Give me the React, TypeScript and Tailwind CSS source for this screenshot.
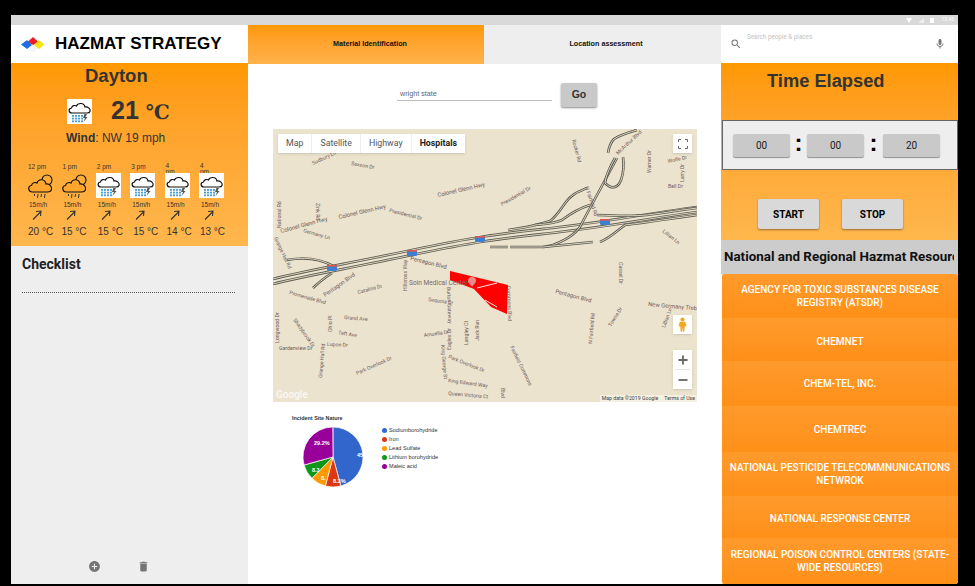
import { MdAddCircle, MdDelete, MdMic, MdSearch } from "react-icons/md";

const HOURS = [
  { time: "12 pm", icon: "rain", temp: "20 °C", tempPad: "pl-[1px]" },
  { time: "1 pm", icon: "rain", temp: "15 °C", tempPad: "pl-[0px]" },
  { time: "2 pm", icon: "storm", temp: "15 °C", tempPad: "pl-[2px]" },
  { time: "3 pm", icon: "storm", temp: "15 °C", tempPad: "pl-[3px]" },
  { time: "4 pm", icon: "storm", temp: "14 °C", tempPad: "pl-[2px]", narrow: true },
  { time: "4 pm", icon: "storm", temp: "13 °C", tempPad: "pl-[1px]", narrow: true },
];

const RESOURCES = [
  { name: "AGENCY FOR TOXIC SUBSTANCES DISEASE REGISTRY (ATSDR)", h: "h-[44px] rounded-t-[2px] px-[8px]" },
  { name: "CHEMNET", h: "h-[43px] pt-[3px]" },
  { name: "CHEM-TEL, INC.", h: "h-[45px]" },
  { name: "CHEMTREC", h: "h-[46px]" },
  { name: "NATIONAL PESTICIDE TELECOMMNUNICATIONS NETWROK", h: "h-[44px] px-[4px]" },
  { name: "NATIONAL RESPONSE CENTER", h: "h-[42px] pt-[3px]" },
  { name: "REGIONAL POISON CONTROL CENTERS (STATE-WIDE RESOURCES)", h: "h-[46px] rounded-b-[2px] px-[8px]" },
];

const LEGEND = [
  { label: "Sodiumborohydride", color: "bg-[#3366cc]" },
  { label: "Iron", color: "bg-[#dc3912]" },
  { label: "Lead Sulfate", color: "bg-[#ff9900]" },
  { label: "Lithium borohydride", color: "bg-[#109618]" },
  { label: "Maleic acid", color: "bg-[#990099]" },
];

// x, y, rotation, text
const STREETS: [number, number, number, string][] = [
  [313, 165, -25, "Sudbury Ln"],
  [351, 165, 10, "Saxson Dr"],
  [281, 228, -90, "National Rd"],
  [316, 203, 90, "Zink Rd"],
  [281, 233, -15, "Colonel Glenn Hwy"],
  [339, 219, -13, "Colonel Glenn Hwy"],
  [438, 197, -13, "Colonel Glenn Hwy"],
  [389, 212, 14, "Presidential Dr"],
  [303, 232, 16, "Germany Ln"],
  [274, 238, 65, "Grange Hall Rd"],
  [410, 260, 14, "Pentagon Blvd"],
  [325, 297, -35, "Pentagon Blvd"],
  [289, 294, 16, "Promenade Blvd"],
  [358, 294, -15, "Catalina Dr"],
  [407, 291, -90, "Hillcross Way"],
  [428, 301, 8, "Sequoia Dr"],
  [447, 287, 88, "Burton Gateway"],
  [279, 343, -90, "Longwood Dr"],
  [293, 320, 55, "Shadybrook Dr"],
  [279, 350, 0, "Gardenview Dr"],
  [344, 319, 5, "Grand Ave"],
  [332, 332, -90, "Ohio Pl"],
  [338, 334, 10, "Taft Ave"],
  [322, 378, -85, "Grange Hall Rd"],
  [327, 346, 2, "Lupon Dr"],
  [424, 337, -8, "Amuella Dr"],
  [451, 350, -90, "Eagles Dr"],
  [441, 345, 85, "King George St"],
  [357, 375, -24, "Park Overlook Dr"],
  [448, 358, 22, "Park Overlook Dr"],
  [448, 382, 8, "King Edward Way"],
  [448, 395, 5, "Queen Victoria Ct"],
  [468, 345, -90, "Langley Ct"],
  [479, 341, -90, "Jack Run"],
  [572, 140, 75, "Rocker Rd"],
  [502, 206, -30, "Presidential Dr"],
  [651, 173, -90, "Warner Dr"],
  [668, 163, -12, "Wolfe Dr"],
  [684, 182, -90, "Larry Dr"],
  [668, 188, 0, "Bell Dr"],
  [618, 155, -43, "McArthur Blvd"],
  [585, 187, 72, "N Fairfield Rd"],
  [662, 232, 38, "Lillian Ln"],
  [619, 262, 90, "Cassel Dr"],
  [555, 293, 15, "Pentagon Blvd"],
  [648, 306, 5, "New Germany Treb"],
  [507, 286, 88, "Commons Blvd"],
  [592, 344, -85, "N Fairfield Rd"],
  [611, 327, -58, "Towne Dr"],
  [665, 328, -70, "Lillian Ln"],
  [510, 347, 64, "Fairfield Commons"],
  [501, 388, 90, "Blvd"],
];

const ROADS = [
  "M273 279 C300 272 340 265 412 250 S500 234 560 227 S650 213 697 207",
  "M273 284 C300 277 340 270 412 255 S500 239 560 232 S650 218 697 212",
  "M287 260 C298 258 315 256 333 266",
  "M313 288 C320 281 326 277 332 273",
  "M587 188 C578 192 572 194 566 202 C560 210 556 217 550 221 C535 226 522 228 508 230",
  "M590 205 C580 208 570 214 562 220 C552 224 544 224 535 225",
  "M617 158 L590 208 L582 223 C578 233 566 240 553 245 C548 246 546 247 543 247 L510 247",
  "M508 247 L490 247",
  "M543 247 L593 242",
  "M600 242 C610 238 618 230 625 225 C650 222 675 218 697 215",
  "M597 215 C620 216 635 216 647 215 C665 213 680 210 697 208",
  "M608 153 C609 147 611 142 614 139 C620 135 630 132 637 130",
  "M623 157 C624 165 624 172 621 180 C618 188 612 190 605 183 C606 175 610 167 615 158",
];

function StormIcon() {
  return (
    <svg viewBox="0 0 25 25" className="w-[25px] h-[25px] bg-white">
      <path
        d="M5 14 C1.5 14 1 9.5 4.5 9 C5 6.5 8 6 9.5 7 C11 3.5 17 3.5 18 8 C21 7.5 24 10 23 12.5 C22.5 14 21 14 20 14 Z"
        fill="none"
        stroke="#111"
        strokeWidth="1.2"
      />
      <g fill="#4a9fd8">
        {[0, 1, 2, 3].flatMap((c) =>
          [0, 1, 2].map((r) => <rect key={`${c}-${r}`} x={5 + c * 3} y={16 + r * 2.7} width="2" height="1.8" />)
        )}
      </g>
      <path d="M17.5 15 L16 19 L18 19 L16.5 23 L20.5 18 L18.5 18 L20 15 Z" fill="#555" />
    </svg>
  );
}

function RainIcon() {
  return (
    <svg viewBox="0 0 25 25" className="w-[26px] h-[25px]">
      <circle cx="19.500" cy="7" r="5" fill="none" stroke="#111" strokeWidth="1.100" />
      <path
        d="M5 19 C0.500 19 0 13 4 12.500 C4.500 9.500 8 9 9.500 10 C11 5.500 17.500 5.500 18.500 11 C22 10.500 25 14 24 16.500 C23.500 19 21.500 19 20 19 Z"
        fill="#ffa62e"
        stroke="#111"
        strokeWidth="1.200"
      />
      <path d="M7 21 L7 23 M10.500 21 L10 25 M14 21 L13.500 24 M17.500 21 L17 25" stroke="#333" strokeWidth="1" />
    </svg>
  );
}

function WindArrow() {
  return (
    <svg viewBox="0 0 10 10" className="w-[10px] h-[10px]">
      <path d="M1 9.500 L8.500 2 M4 1.500 L9 1 L8.500 6" fill="none" stroke="#333" strokeWidth="1.100" />
    </svg>
  );
}

function Logo() {
  return (
    <svg viewBox="0 0 24 15" className="w-[24px] h-[15px]">
      <path d="M12 8 L17 12 L12 15 L7 12 Z" fill="#f6f6f6" />
      <path d="M12 0 L17.500 5 L12 8 L6.500 5 Z" fill="#ee1c25" />
      <path d="M6 3 L11 8 L6 12 L0 7.500 Z" fill="#1c6fe8" />
      <path d="M18 3 L23.500 7.500 L18 12 L13 8 Z" fill="#f7e417" />
    </svg>
  );
}

function Pie() {
  const cx = 333;
  const cy = 457;
  const r = 30;
  const parts = [
    { v: 45.8, c: "#3366cc" },
    { v: 8.3, c: "#dc3912" },
    { v: 8.3, c: "#ff9900" },
    { v: 8.3, c: "#109618" },
    { v: 29.2, c: "#990099" },
  ];
  let acc = 0;
  return (
    <svg viewBox="300 425 66 66" className="w-[66px] h-[66px]">
      {parts.map((p) => {
        const a0 = (acc / 100) * Math.PI * 2;
        acc += p.v;
        const a1 = (acc / 100) * Math.PI * 2;
        const d = `M${cx} ${cy} L${cx + r * Math.sin(a0)} ${cy - r * Math.cos(a0)} A${r} ${r} 0 0 1 ${cx + r * Math.sin(a1)} ${cy - r * Math.cos(a1)} Z`;
        return <path key={p.c} d={d} fill={p.c} stroke="#fff" strokeWidth="0.7" />;
      })}
      <g fontSize="5.5" fontWeight="700" fill="#fff" fontFamily="Liberation Sans, sans-serif">
        <text x="357" y="457">45</text>
        <text x="333" y="483">8.3%</text>
        <text x="321" y="480">8.</text>
        <text x="312" y="472">8.3</text>
        <text x="314" y="445">29.2%</text>
      </g>
    </svg>
  );
}

function MapCanvas() {
  return (
    <svg viewBox="273 129 424 273" className="absolute inset-0 w-full h-full">
      <rect x="273" y="129" width="424" height="273" fill="#ebe3cd" />
      {ROADS.map((d, i) => (
        <g key={i} fill="none">
          <path d={d} stroke="#5b5a50" strokeWidth="2.600" />
          <path d={d} stroke="#ebe3cd" strokeWidth="0.900" />
        </g>
      ))}
      {[[332, 268], [412, 253], [480, 239], [605, 222]].map(([x, y]) => (
        <g key={x}>
          <rect x={x - 5} y={y - 3} width="10" height="6" rx="1.500" fill="#3f7fd1" />
          <rect x={x - 5} y={y - 3} width="10" height="1.600" fill="#e2574c" />
        </g>
      ))}
      <g fontFamily="Roboto, sans-serif" fontSize="5.2" fill="#6f5a5a">
        {STREETS.map(([x, y, rot, label]) => (
          <text
            key={`${x}-${y}`}
            x={x}
            y={y}
            transform={`rotate(${rot} ${x} ${y})`}
            fontSize={label === "New Germany Treb" || label === "Pentagon Blvd" || label === "Colonel Glenn Hwy" ? 5.8 : 5.2}
          >
            {label}
          </text>
        ))}
      </g>
      <path d="M450 271 L508 285 L507 314 L491 307 L474 289 L450 280 Z" fill="#fe0000" />
      <path d="M477 288 L497 283 M485 300 L497 307" stroke="#ffffff" strokeWidth="0.900" />
      <text x="409" y="285" fontFamily="Roboto, sans-serif" fontSize="6.600" fill="#7a6a6a">Soin Medical Center</text>
      <path d="M472 277 a4 4 0 0 1 4 4 c0 2 -2.500 3.500 -4 6 c-1.500 -2.500 -4 -4 -4 -6 a4 4 0 0 1 4 -4 Z" fill="#ee8a8a" />
      <text x="276" y="398" fontFamily="Roboto, sans-serif" fontSize="10" fontWeight="500" fill="#ffffff" opacity="0.8">Google</text>
    </svg>
  );
}

export default function App() {
  return (
    <div className="w-[975px] h-[586px] bg-black overflow-hidden pt-[15px] pl-[11px]" style={{ fontFamily: "'Liberation Sans', sans-serif" }}>
      <div className="w-[947px] h-[569px] bg-white overflow-hidden rounded-br-[3px] flex flex-col">
        {/* status bar */}
        <div className="h-[10px] bg-[#d9d9d9] flex items-center justify-end gap-[6px] pr-[4px]">
          <svg viewBox="0 0 6 5" className="w-[6px] h-[5px]"><path d="M0 0 H6 L3 5 Z" fill="#fff" /></svg>
          <svg viewBox="0 0 6 5" className="w-[6px] h-[5px]"><path d="M0 5 H6 V0 Z" fill="#eee" /></svg>
          <div className="w-[4px] h-[5px] bg-white" />
          <span className="text-[5px] text-white font-['Roboto'] ml-[2px]">15:45</span>
        </div>

        <div className="flex-1 flex min-h-0">
          {/* left column */}
          <div className="w-[237px] flex flex-col">
            <div className="h-[38px] bg-white flex items-center pl-[10px] gap-[10px] shrink-0">
              <Logo />
              <span className="text-[17px] font-bold text-black whitespace-nowrap">HAZMAT STRATEGY</span>
            </div>
            <div className="h-[183px] shrink-0 bg-gradient-to-b from-[#ff9800] to-[#ffb74d] flex flex-col text-[#333]">
              <div className="text-[18.5px] font-bold leading-[20px] mt-[3px] pl-[74px]">Dayton</div>
              <div className="flex items-center mt-[11px] pl-[56px]">
                <StormIcon />
                <span className="text-[25px] font-bold leading-[26px] ml-[19px] whitespace-nowrap">21 <span className="font-['DejaVu_Serif'] text-[20px]">℃</span></span>
              </div>
              <div className="text-[12px] leading-[16px] mt-[5px] pl-[55px]"><b>Wind</b>: NW 19 mph</div>
              <div className="flex mt-[16px] pl-[16px]">
                {HOURS.map((h, i) => (
                  <div key={i} className="w-[34.4px] flex flex-col">
                    <div className={`text-[6.5px] h-[9px] mt-[1px] pl-[1px] ${h.narrow ? "w-[10px] leading-[6px]" : "leading-[7px]"}`}>{h.time}</div>
                    <div className="mt-[1px]">
                      {h.icon === "rain" ? <RainIcon /> : <StormIcon />}
                    </div>
                    <div className="text-[6.5px] leading-[9px] mt-[2px] pl-[2px]">15m/h</div>
                    <div className="pl-[5px] mt-[1px]"><WindArrow /></div>
                    <div className={`text-[10px] leading-[13px] mt-[5px] whitespace-nowrap ${h.tempPad}`}>{h.temp}</div>
                  </div>
                ))}
              </div>
            </div>
            <div className="flex-1 bg-[#eeeeee] flex flex-col px-[11px]">
              <div className="text-[14px] font-bold font-['Roboto'] text-[#222] leading-[16px] mt-[10px]">Checklist</div>
              <div className="mt-[20px] border-b border-dotted border-[#555] mr-[2px]" />
              <div className="mt-auto mb-[11px] flex text-[#757575] text-[13px] pl-[66px] gap-[36px]">
                <MdAddCircle />
                <MdDelete />
              </div>
            </div>
          </div>

          {/* middle column */}
          <div className="w-[473px] flex flex-col bg-white">
            <div className="h-[39px] flex shrink-0 text-[7.2px] font-bold text-[#111]">
              <div className="w-[236px] pl-[8px] bg-gradient-to-b from-[#ff9800] to-[#ffb24a] flex items-center justify-center">Material Identification</div>
              <div className="flex-1 pl-[7px] bg-[#eeeeee] flex items-center justify-center">Location assessment</div>
            </div>
            <div className="flex items-start mt-[19px] pl-[149px] h-[23px] shrink-0">
              <div className="w-[155px] h-[18px] border-b border-[#bdbdbd] text-[7.2px] text-[#666] pl-[3px] pt-[6px] leading-[9px]">wright state</div>
              <div className="ml-[9px] w-[36px] h-[24px] bg-[#c9c9c9] rounded-[2px] shadow-[0_1px_2px_rgba(0,0,0,0.45)] flex items-center justify-center text-[10.5px] font-bold text-[#333]">Go</div>
            </div>

            <div className="relative w-[424px] h-[273px] ml-[25px] mt-[23px] shrink-0 overflow-hidden">
              <MapCanvas />
              <div className="absolute left-[5px] top-[5px] h-[19px] flex bg-white text-[8.8px] text-[#565656] shadow-sm font-['Roboto'] items-center">
                <span className="px-[8px]">Map</span>
                <span className="px-[8px] border-l border-[#eee] leading-[19px]">Satellite</span>
                <span className="px-[8px] border-l border-[#eee] leading-[19px]">Highway</span>
                <span className="px-[8px] border-l border-[#eee] leading-[19px] font-bold text-[#222]">Hospitals</span>
              </div>
              <div className="absolute right-[5px] top-[5px] w-[19px] h-[19px] bg-white shadow-sm flex items-center justify-center">
                <svg viewBox="0 0 10 10" className="w-[10px] h-[10px]"><path d="M0.500 3 V0.500 H3 M7 0.500 H9.500 V3 M9.500 7 V9.500 H7 M3 9.500 H0.500 V7" fill="none" stroke="#666" strokeWidth="1" /></svg>
              </div>
              <div className="absolute right-[5px] top-[186px] w-[19px] h-[19px] bg-white shadow-sm flex items-center justify-center">
                <svg viewBox="0 0 10 16" className="w-[9px] h-[15px]">
                  <circle cx="5" cy="2.500" r="2.300" fill="#f0a91f" />
                  <path d="M2 5 H8 L9.500 10 H7.500 L7 16 H5.500 L5 11 L4.500 16 H3 L2.500 10 H0.500 Z" fill="#f0a91f" />
                </svg>
              </div>
              <div className="absolute right-[5px] top-[221px] w-[19px] h-[39px] bg-white shadow-sm flex flex-col items-center text-[#666]">
                <svg viewBox="0 0 10 10" className="w-[10px] h-[10px] mt-[5px]"><path d="M5 0.500 V9.500 M0.500 5 H9.500" stroke="#666" strokeWidth="1.800" /></svg>
                <div className="w-[15px] border-t border-[#e6e6e6] mt-[4px]" />
                <svg viewBox="0 0 10 10" className="w-[10px] h-[10px] mt-[5px]"><path d="M0.500 5 H9.500" stroke="#666" strokeWidth="1.800" /></svg>
              </div>
              <div className="absolute right-0 bottom-0 h-[7px] bg-[#f5f1e6]/80 flex gap-[6px] px-[2px] text-[5.2px] leading-[7px] text-[#444] font-['Roboto']">
                <span>Map data ©2019 Google</span>
                <span>Terms of Use</span>
              </div>
            </div>

            <div className="flex mt-[12px] ml-[44px] text-[#333]">
              <div className="flex flex-col w-[92px]">
                <div className="text-[5.4px] font-bold leading-[7px] mt-[1px] whitespace-nowrap">Incident Site Nature</div>
                <div className="ml-[8px] mt-[3px]"><Pie /></div>
              </div>
              <div className="flex flex-col mt-[13px] text-[5.6px] gap-[2px] -ml-[2px]">
                {LEGEND.map((l) => (
                  <div key={l.label} className="flex items-center gap-[2px] h-[7px] whitespace-nowrap leading-[7px]">
                    <span className={`w-[5px] h-[5px] rounded-full ${l.color}`} />
                    {l.label}
                  </div>
                ))}
              </div>
            </div>
          </div>

          {/* right column */}
          <div className="w-[237px] flex flex-col">
            <div className="h-[38px] bg-white flex items-center pl-[9px] pr-[12px] shrink-0 font-['Roboto']">
              <MdSearch className="text-[#777] text-[12px]" />
              <span className="ml-[5px] text-[6.3px] text-[#c2c2c2] -mt-[12px]">Search people &amp; places</span>
              <MdMic className="ml-auto text-[#777] text-[12px]" />
            </div>
            <div className="h-[177px] shrink-0 bg-gradient-to-b from-[#ff9800] to-[#ffb74d] flex flex-col">
              <div className="text-[18.3px] font-bold text-[#333] leading-[22px] mt-[7px] pl-[46px]">Time Elapsed</div>
              <div className="mt-[28px] ml-[1px] h-[50px] bg-[#eeeeee] border border-[#666] flex items-center pl-[10px] font-['Roboto'] text-[10px] text-[#222]">
                <div className="w-[57px] h-[23px] bg-[#c9c9c9] rounded-[2px] shadow-[0_1px_1px_rgba(0,0,0,0.4)] flex items-center justify-center">00</div>
                <span className="w-[17px] text-center font-bold text-[24px] leading-[24px] -mt-[4px] text-black font-['Liberation_Sans']">:</span>
                <div className="w-[57px] h-[23px] bg-[#c9c9c9] rounded-[2px] shadow-[0_1px_1px_rgba(0,0,0,0.4)] flex items-center justify-center">00</div>
                <span className="w-[19px] text-center font-bold text-[24px] leading-[24px] -mt-[4px] text-black font-['Liberation_Sans']">:</span>
                <div className="w-[57px] h-[23px] bg-[#c9c9c9] rounded-[2px] shadow-[0_1px_1px_rgba(0,0,0,0.4)] flex items-center justify-center">20</div>
              </div>
              <div className="flex mt-[29px] pl-[37px] gap-[23px] font-['Roboto'] font-bold text-[10px] text-black">
                <div className="w-[61px] h-[30px] bg-[#d9d9d9] rounded-[2px] shadow-[0_1px_2px_rgba(0,0,0,0.4)] flex items-center justify-center">START</div>
                <div className="w-[61px] h-[30px] bg-[#d9d9d9] rounded-[2px] shadow-[0_1px_2px_rgba(0,0,0,0.4)] flex items-center justify-center">STOP</div>
              </div>
            </div>
            <div className="h-[34px] bg-[#cccccc] shrink-0 pl-[3px] flex items-center">
              <div className="w-[230px] overflow-hidden text-[13.4px] font-bold font-['Roboto'] text-[#111] whitespace-nowrap">National and Regional Hazmat Resources</div>
            </div>
            <div className="flex flex-col ml-[1px] font-['Roboto'] font-medium text-[10px] leading-[13px] text-white text-center">
              {RESOURCES.map((r) => (
                <div key={r.name} className={`${r.h} shrink-0 bg-gradient-to-b from-[#ff9a2b] to-[#ff9018] flex items-center justify-center`}>
                  {r.name}
                </div>
              ))}
            </div>
          </div>
        </div>
      </div>
    </div>
  );
}
